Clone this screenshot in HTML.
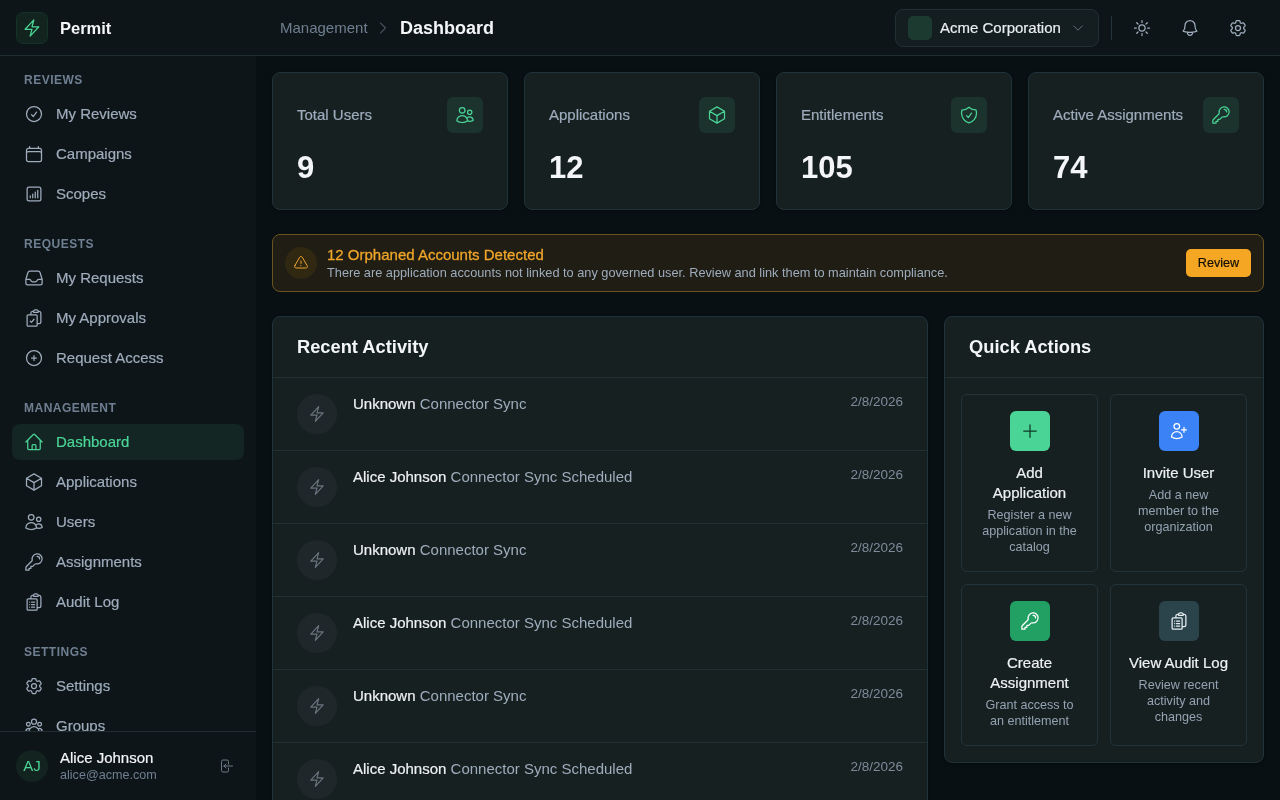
<!DOCTYPE html>
<html><head><meta charset="utf-8">
<style>
*{box-sizing:border-box;margin:0;padding:0}
html,body{-webkit-font-smoothing:antialiased;width:1280px;height:800px;overflow:hidden;background:#091013;font-family:"Liberation Sans",sans-serif;color:#e8edf0}
svg{display:block}
.ic{fill:none;stroke:currentColor;stroke-width:1.5;stroke-linecap:round;stroke-linejoin:round}
#hdr{position:absolute;left:0;top:0;width:1280px;height:56px;background:#0e1518;border-bottom:1px solid #1f2c31}
#logo{position:absolute;left:16px;top:12px;width:32px;height:32px;border-radius:7px;background:#13241f;border:1px solid #16302a;color:#4ad597}
#logo svg{position:absolute;left:5px;top:5px}
#brand{position:absolute;left:60px;top:19px;font-size:16.5px;font-weight:bold;color:#f3f5f7}
#bc1{position:absolute;left:280px;top:19px;font-size:15px;color:#6f7f92}
#bcchev{position:absolute;left:375px;top:20px;color:#6b7a88}
#bc2{position:absolute;left:400px;top:18px;font-size:18px;font-weight:bold;color:#f3f5f7}
#org{position:absolute;left:895px;top:9px;width:204px;height:38px;border-radius:8px;background:#141d20;border:1px solid #223036}
#orgsq{position:absolute;left:12px;top:6px;width:24px;height:24px;border-radius:5px;background:#1c3a30}
#orgname{position:absolute;left:44px;top:9px;font-size:15px;color:#e8edf0}
#orgchev{position:absolute;left:175px;top:11px;color:#6b7a88}
#vdiv{position:absolute;left:1111px;top:16px;width:1px;height:24px;background:#22353a}
.hi{position:absolute;top:18px;color:#9eacbc}
#side{position:absolute;left:0;top:56px;width:256px;height:744px;background:#0e1518}
.sec{position:absolute;margin-top:1px;left:24px;font-size:12px;font-weight:bold;letter-spacing:0.5px;color:#6f7f92}
.nav{position:absolute;left:12px;width:232px;height:36px;border-radius:8px;color:#9eacbc}
.nav svg{position:absolute;left:12px;top:8px}
.nav span{position:absolute;left:44px;top:9px;font-size:15px}
.nav.act{background:#142624;color:#4ad597}
#foot{position:absolute;left:0;top:731px;width:256px;height:69px;background:#0e1518;border-top:1px solid #1f2c31}
#av{position:absolute;left:16px;top:18px;width:32px;height:32px;border-radius:16px;background:#13231f;color:#4ad597;font-size:15px;text-align:center;line-height:32px}
#uname{position:absolute;left:60px;top:17px;font-size:15px;color:#f3f5f7}
#umail{position:absolute;left:60px;top:36px;font-size:12.6px;color:#6f7f92}
#logout{position:absolute;left:218px;top:26px;color:#6b7a88}

.card{position:absolute;background:#162021;border:1px solid #21333a;border-radius:8px;box-shadow:0 1px 3px rgba(0,0,0,0.35)}
.stat .lbl{position:absolute;left:24px;top:33px;font-size:15px;color:#9eacbc}
.stat .num{position:absolute;left:24px;top:77px;font-size:31px;font-weight:bold;color:#f3f5f7}
.stat .ib{position:absolute;right:24px;top:24px;width:36px;height:36px;border-radius:6px;background:#1b322d;color:#4ad597}
.stat .ib svg{position:absolute;left:8px;top:8px}
#alert{position:absolute;left:272px;top:234px;width:992px;height:58px;border-radius:8px;background:#1f1d14;border:1px solid #6b5320}
#alic{position:absolute;left:12px;top:12px;width:32px;height:32px;border-radius:16px;background:#312812;color:#f0a52a}
#alic svg{position:absolute;left:8px;top:8px}
#alt{position:absolute;left:54px;top:11px;font-size:15px;color:#f0a52a}
#als{position:absolute;left:54px;top:30px;font-size:12.75px;color:#9eacbc}
#albtn{position:absolute;left:913px;top:14px;width:65px;height:28px;border-radius:5px;background:#f5a623;color:#120e06;font-size:12.6px;text-align:center;line-height:28px}
.ch{position:absolute;left:0;top:0;right:0;height:61px;border-bottom:1px solid #223036}
.ch div{position:absolute;left:24px;top:19px;font-size:18.3px;font-weight:bold;color:#f3f5f7}
.row{position:absolute;left:0;right:0;height:73px;border-bottom:1px solid #223036}
.row .cir{position:absolute;left:24px;top:16px;width:40px;height:40px;border-radius:20px;background:#1f272b;color:#6b7680}
.row .cir svg{position:absolute;left:11px;top:11px}
.row .t{position:absolute;left:80px;top:17px;font-size:15px;color:#9eacbc;white-space:nowrap}
.row .t b{color:#eef1f3;font-weight:normal}
.row .d{position:absolute;right:24px;top:16px;font-size:13.5px;color:#7d8a9a}
.tile{position:absolute;border:1px solid #22343a;border-radius:6px;background:#162021;text-align:center}
.tile .box{position:absolute;left:48px;top:16px;width:40px;height:40px;border-radius:6px}
.tile .box svg{position:absolute;left:10px;top:10px}
.tile .tt{position:absolute;left:0;right:0;white-space:nowrap;top:68px;font-size:15px;line-height:20px;color:#eef1f3}
.tile .ds{position:absolute;left:0;right:0;white-space:nowrap;font-size:12.6px;line-height:16px;color:#94a2b2}

.med{-webkit-text-stroke:0.2px currentColor}
.nav span,#orgname,#uname,.row .t b,.tile .tt,#albtn,.stat .lbl{-webkit-text-stroke:0.2px currentColor}
#alt{-webkit-text-stroke:0.3px currentColor}
</style></head>
<body><div id="root" style="position:absolute;left:0;top:0;width:1280px;height:800px;will-change:transform">
<div id="hdr">
  <div id="logo"><svg width="20" height="20" viewBox="0 0 24 24" class="ic"><path d="m3.75 13.5 10.5-11.25L12 10.5h8.25L9.75 21.75 12 13.5H3.75Z"/></svg></div>
  <div id="brand">Permit</div>
  <div id="bc1">Management</div>
  <svg id="bcchev" width="16" height="16" viewBox="0 0 24 24" class="ic"><path d="m8.25 4.5 7.5 7.5-7.5 7.5"/></svg>
  <div id="bc2">Dashboard</div>
  <div id="org"><div id="orgsq"></div><div id="orgname">Acme Corporation</div>
    <svg id="orgchev" width="14" height="14" viewBox="0 0 24 24" class="ic"><path d="m19.5 8.25-7.5 7.5-7.5-7.5"/></svg></div>
  <div id="vdiv"></div>
  <svg class="hi ic" style="left:1132px" width="20" height="20" viewBox="0 0 24 24"><path d="M12 3v2.25m6.364.386-1.591 1.591M21 12h-2.25m-.386 6.364-1.591-1.591M12 18.75V21m-4.773-4.227-1.591 1.591M5.25 12H3m4.227-4.773L5.636 5.636M15.75 12a3.75 3.75 0 1 1-7.5 0 3.75 3.75 0 0 1 7.5 0Z"/></svg>
  <svg class="hi ic" style="left:1180px" width="20" height="20" viewBox="0 0 24 24"><path d="M14.857 17.082a23.848 23.848 0 0 0 5.454-1.31A8.967 8.967 0 0 1 18 9.750V9A6 6 0 0 0 6 9v.75a8.967 8.967 0 0 1-2.312 6.022c1.733.64 3.56 1.085 5.455 1.31m5.714 0a24.255 24.255 0 0 1-5.714 0m5.714 0a3 3 0 1 1-5.714 0"/></svg>
  <svg class="hi ic" style="left:1228px" width="20" height="20" viewBox="0 0 24 24"><path d="M9.594 3.94c.09-.542.56-.94 1.11-.94h2.593c.55 0 1.02.398 1.11.94l.213 1.281c.063.374.313.686.645.87.074.04.147.083.22.127.325.196.72.257 1.075.124l1.217-.456a1.125 1.125 0 0 1 1.37.49l1.296 2.247a1.125 1.125 0 0 1-.26 1.431l-1.003.827c-.293.241-.438.613-.43.992a7.723 7.723 0 0 1 0 .255c-.008.378.137.75.43.991l1.004.827c.424.35.534.955.26 1.430l-1.298 2.247a1.125 1.125 0 0 1-1.369.491l-1.217-.456c-.355-.133-.75-.072-1.076.124a6.470 6.470 0 0 1-.22.128c-.331.183-.581.495-.644.869l-.213 1.281c-.09.543-.56.94-1.11.94h-2.594c-.55 0-1.019-.398-1.11-.94l-.213-1.281c-.062-.374-.312-.686-.644-.87a6.520 6.520 0 0 1-.22-.127c-.325-.196-.72-.257-1.076-.124l-1.217.456a1.125 1.125 0 0 1-1.369-.49l-1.297-2.247a1.125 1.125 0 0 1 .26-1.431l1.004-.827c.292-.24.437-.613.43-.991a6.932 6.932 0 0 1 0-.255c.007-.38-.138-.751-.43-.992l-1.004-.827a1.125 1.125 0 0 1-.26-1.43l1.297-2.247a1.125 1.125 0 0 1 1.370-.491l1.216.456c.356.133.751.072 1.076-.124.072-.044.146-.086.22-.128.332-.183.582-.495.644-.869l.214-1.280Z"/><path d="M15 12a3 3 0 1 1-6 0 3 3 0 0 1 6 0Z"/></svg>
</div>

<div id="side">
<div class="sec" style="top:16px">REVIEWS</div>
<div class="nav" style="top:40px"><svg width="20" height="20" viewBox="0 0 24 24" class="ic"><path d="M9 12.75 11.25 15 15 9.75M21 12a9 9 0 1 1-18 0 9 9 0 0 1 18 0Z"/></svg><span>My Reviews</span></div>
<div class="nav" style="top:80px"><svg width="20" height="20" viewBox="0 0 24 24" class="ic"><path d="M6.75 3v2.25M17.25 3v2.25M3 18.75V7.5a2.25 2.25 0 0 1 2.25-2.25h13.5A2.25 2.25 0 0 1 21 7.5v11.25m-18 0A2.25 2.25 0 0 0 5.25 21h13.5A2.25 2.25 0 0 0 21 18.75m-18 0v-7.5A2.25 2.25 0 0 1 5.25 9h13.5A2.25 2.25 0 0 1 21 11.25v7.5"/></svg><span>Campaigns</span></div>
<div class="nav" style="top:120px"><svg width="20" height="20" viewBox="0 0 24 24" class="ic"><path d="M7.5 14.25v2.25m3-4.5v4.5m3-6.75v6.75m3-9v9M6 20.25h12A2.250 2.250 0 0 0 20.25 18V6A2.250 2.250 0 0 0 18 3.75H6A2.250 2.250 0 0 0 3.75 6v12A2.250 2.250 0 0 0 6 20.25Z"/></svg><span>Scopes</span></div>
<div class="sec" style="top:180px">REQUESTS</div>
<div class="nav" style="top:204px"><svg width="20" height="20" viewBox="0 0 24 24" class="ic"><path d="M2.25 13.5h3.86a2.25 2.25 0 0 1 2.012 1.244l.256.512a2.25 2.25 0 0 0 2.013 1.244h3.218a2.25 2.25 0 0 0 2.013-1.244l.256-.512a2.25 2.25 0 0 1 2.013-1.244h3.859m-19.5.338V18a2.25 2.25 0 0 0 2.25 2.25h15A2.25 2.25 0 0 0 21.75 18v-4.162c0-.224-.034-.447-.1-.661L19.24 5.338a2.25 2.25 0 0 0-2.15-1.588H6.911a2.25 2.25 0 0 0-2.15 1.588L2.35 13.177a2.25 2.25 0 0 0-.1.661Z"/></svg><span>My Requests</span></div>
<div class="nav" style="top:244px"><svg width="20" height="20" viewBox="0 0 24 24" class="ic"><path d="M11.35 3.836c-.065.21-.1.433-.1.664 0 .414.336.75.75.75h4.5a.75.75 0 0 0 .75-.75 2.25 2.25 0 0 0-.1-.664m-5.8 0A2.251 2.251 0 0 1 13.5 2.25H15c1.012 0 1.867.668 2.15 1.586m-5.8 0c-.376.023-.75.05-1.124.08C9.095 4.01 8.25 4.973 8.25 6.108V8.25m8.9-4.414c.376.023.75.05 1.124.08 1.131.094 1.976 1.057 1.976 2.192V16.5A2.25 2.25 0 0 1 18 18.75h-2.25m-7.5-10.5H4.875c-.621 0-1.125.504-1.125 1.125v11.25c0 .621.504 1.125 1.125 1.125h9.75c.621 0 1.125-.504 1.125-1.125V18.75m-7.5-10.5h6.375c.621 0 1.125.504 1.125 1.125v9.375m-8.25-3 1.5 1.5 3-3.75"/></svg><span>My Approvals</span></div>
<div class="nav" style="top:284px"><svg width="20" height="20" viewBox="0 0 24 24" class="ic"><path d="M12 9v6m3-3H9m12 0a9 9 0 1 1-18 0 9 9 0 0 1 18 0Z"/></svg><span>Request Access</span></div>
<div class="sec" style="top:344px">MANAGEMENT</div>
<div class="nav act" style="top:368px"><svg width="20" height="20" viewBox="0 0 24 24" class="ic"><path d="m2.25 12 8.954-8.955c.44-.439 1.152-.439 1.591 0L21.75 12M4.5 9.75v10.125c0 .621.504 1.125 1.125 1.125H9.75v-4.875c0-.621.504-1.125 1.125-1.125h2.25c.621 0 1.125.504 1.125 1.125V21h4.125c.621 0 1.125-.504 1.125-1.125V9.75M8.25 21h8.25"/></svg><span>Dashboard</span></div>
<div class="nav" style="top:408px"><svg width="20" height="20" viewBox="0 0 24 24" class="ic"><path d="m21 7.5-9-5.25L3 7.5m18 0-9 5.25m9-5.25v9l-9 5.25M3 7.5l9 5.25M3 7.5v9l9 5.25m0-9v9"/></svg><span>Applications</span></div>
<div class="nav" style="top:448px"><svg width="20" height="20" viewBox="0 0 24 24" class="ic"><path d="M15 19.128a9.38 9.38 0 0 0 2.625.372 9.337 9.337 0 0 0 4.121-.952 4.125 4.125 0 0 0-7.533-2.493M15 19.128v-.003c0-1.113-.285-2.16-.786-3.07M15 19.128v.106A12.318 12.318 0 0 1 8.624 21c-2.331 0-4.512-.645-6.374-1.766l-.001-.109a6.375 6.375 0 0 1 11.964-3.07M12 6.375a3.375 3.375 0 1 1-6.75 0 3.375 3.375 0 0 1 6.75 0Zm8.25 2.25a2.625 2.625 0 1 1-5.25 0 2.625 2.625 0 0 1 5.25 0Z"/></svg><span>Users</span></div>
<div class="nav" style="top:488px"><svg width="20" height="20" viewBox="0 0 24 24" class="ic"><path d="M15.75 5.25a3 3 0 0 1 3 3m3 0a6 6 0 0 1-7.029 5.912c-.563-.097-1.159.026-1.563.43L10.5 17.25H8.25v2.25H6v2.25H2.25v-2.818c0-.597.237-1.17.659-1.591l6.499-6.499c.404-.404.527-1 .43-1.563A6 6 0 1 1 21.75 8.25Z"/></svg><span>Assignments</span></div>
<div class="nav" style="top:528px"><svg width="20" height="20" viewBox="0 0 24 24" class="ic"><path d="M9 12h3.75M9 15h3.75M9 18h3.75m3 .75H18a2.25 2.25 0 0 0 2.25-2.25V6.108c0-1.135-.845-2.098-1.976-2.192a48.424 48.424 0 0 0-1.123-.08m-5.801 0c-.065.21-.1.433-.1.664 0 .414.336.75.75.75h4.5a.75.75 0 0 0 .75-.75 2.25 2.25 0 0 0-.1-.664m-5.8 0A2.251 2.251 0 0 1 13.5 2.25H15c1.012 0 1.867.668 2.15 1.586m-5.8 0c-.376.023-.75.05-1.124.08C9.095 4.01 8.25 4.973 8.25 6.108V8.25m0 0H4.875c-.621 0-1.125.504-1.125 1.125v11.25c0 .621.504 1.125 1.125 1.125h9.75c.621 0 1.125-.504 1.125-1.125V9.375c0-.621-.504-1.125-1.125-1.125H8.25ZM6.75 12h.008v.008H6.75V12Zm0 3h.008v.008H6.75V15Zm0 3h.008v.008H6.75V18Z"/></svg><span>Audit Log</span></div>
<div class="sec" style="top:588px">SETTINGS</div>
<div class="nav" style="top:612px"><svg width="20" height="20" viewBox="0 0 24 24" class="ic"><path d="M9.594 3.94c.09-.542.56-.94 1.11-.94h2.593c.55 0 1.02.398 1.11.94l.213 1.281c.063.374.313.686.645.87.074.04.147.083.22.127.325.196.72.257 1.075.124l1.217-.456a1.125 1.125 0 0 1 1.37.49l1.296 2.247a1.125 1.125 0 0 1-.26 1.431l-1.003.827c-.293.241-.438.613-.43.992a7.723 7.723 0 0 1 0 .255c-.008.378.137.75.43.991l1.004.827c.424.35.534.955.26 1.430l-1.298 2.247a1.125 1.125 0 0 1-1.369.491l-1.217-.456c-.355-.133-.75-.072-1.076.124a6.470 6.470 0 0 1-.22.128c-.331.183-.581.495-.644.869l-.213 1.281c-.09.543-.56.94-1.11.94h-2.594c-.55 0-1.019-.398-1.11-.94l-.213-1.281c-.062-.374-.312-.686-.644-.87a6.520 6.520 0 0 1-.22-.127c-.325-.196-.72-.257-1.076-.124l-1.217.456a1.125 1.125 0 0 1-1.369-.49l-1.297-2.247a1.125 1.125 0 0 1 .26-1.431l1.004-.827c.292-.24.437-.613.43-.991a6.932 6.932 0 0 1 0-.255c.007-.38-.138-.751-.43-.992l-1.004-.827a1.125 1.125 0 0 1-.26-1.43l1.297-2.247a1.125 1.125 0 0 1 1.370-.491l1.216.456c.356.133.751.072 1.076-.124.072-.044.146-.086.22-.128.332-.183.582-.495.644-.869l.214-1.280Z"/><path d="M15 12a3 3 0 1 1-6 0 3 3 0 0 1 6 0Z"/></svg><span>Settings</span></div>
<div class="nav" style="top:652px"><svg width="20" height="20" viewBox="0 0 24 24" class="ic"><path d="M18 18.72a9.094 9.094 0 0 0 3.741-.479 3 3 0 0 0-4.682-2.72m.94 3.198.001.031c0 .225-.012.447-.037.666A11.944 11.944 0 0 1 12 21c-2.17 0-4.207-.576-5.963-1.584A6.062 6.062 0 0 1 6 18.719m12 0a5.971 5.971 0 0 0-.941-3.197m0 0A5.995 5.995 0 0 0 12 12.75a5.995 5.995 0 0 0-5.058 2.772m0 0a3 3 0 0 0-4.681 2.72 8.986 8.986 0 0 0 3.74.477m.94-3.197a5.971 5.971 0 0 0-.94 3.197M15 6.75a3 3 0 1 1-6 0 3 3 0 0 1 6 0Zm6 3a2.25 2.25 0 1 1-4.5 0 2.25 2.25 0 0 1 4.5 0Zm-13.5 0a2.25 2.25 0 1 1-4.5 0 2.25 2.25 0 0 1 4.5 0Z"/></svg><span>Groups</span></div>
</div>

<div id="foot"><div id="av">AJ</div><div id="uname">Alice Johnson</div><div id="umail">alice@acme.com</div>
<svg id="logout" width="16" height="16" viewBox="0 0 24 24" class="ic"><path d="M15.75 9V5.25A2.25 2.25 0 0 0 13.5 3h-6a2.25 2.25 0 0 0-2.25 2.25v13.5A2.25 2.25 0 0 0 7.5 21h6a2.25 2.25 0 0 0 2.25-2.25V15M12 9l-3 3m0 0 3 3m-3-3h12.75"/></svg></div>
<div class="card stat" style="left:272px;top:72px;width:236px;height:138px"><div class="lbl">Total Users</div><div class="num">9</div><div class="ib"><svg width="20" height="20" viewBox="0 0 24 24" class="ic"><path d="M15 19.128a9.38 9.38 0 0 0 2.625.372 9.337 9.337 0 0 0 4.121-.952 4.125 4.125 0 0 0-7.533-2.493M15 19.128v-.003c0-1.113-.285-2.16-.786-3.07M15 19.128v.106A12.318 12.318 0 0 1 8.624 21c-2.331 0-4.512-.645-6.374-1.766l-.001-.109a6.375 6.375 0 0 1 11.964-3.07M12 6.375a3.375 3.375 0 1 1-6.75 0 3.375 3.375 0 0 1 6.75 0Zm8.25 2.25a2.625 2.625 0 1 1-5.25 0 2.625 2.625 0 0 1 5.25 0Z"/></svg></div></div>
<div class="card stat" style="left:524px;top:72px;width:236px;height:138px"><div class="lbl">Applications</div><div class="num">12</div><div class="ib"><svg width="20" height="20" viewBox="0 0 24 24" class="ic"><path d="m21 7.5-9-5.25L3 7.5m18 0-9 5.25m9-5.25v9l-9 5.25M3 7.5l9 5.25M3 7.5v9l9 5.25m0-9v9"/></svg></div></div>
<div class="card stat" style="left:776px;top:72px;width:236px;height:138px"><div class="lbl">Entitlements</div><div class="num">105</div><div class="ib"><svg width="20" height="20" viewBox="0 0 24 24" class="ic"><path d="M9 12.75 11.25 15 15 9.75m-3-7.036A11.959 11.959 0 0 1 3.598 6 11.99 11.99 0 0 0 3 9.749c0 5.592 3.824 10.29 9 11.623 5.176-1.332 9-6.03 9-11.622 0-1.31-.21-2.571-.598-3.751h-.152c-3.196 0-6.1-1.248-8.25-3.285Z"/></svg></div></div>
<div class="card stat" style="left:1028px;top:72px;width:236px;height:138px"><div class="lbl">Active Assignments</div><div class="num">74</div><div class="ib"><svg width="20" height="20" viewBox="0 0 24 24" class="ic"><path d="M15.75 5.25a3 3 0 0 1 3 3m3 0a6 6 0 0 1-7.029 5.912c-.563-.097-1.159.026-1.563.43L10.5 17.25H8.25v2.25H6v2.25H2.25v-2.818c0-.597.237-1.17.659-1.591l6.499-6.499c.404-.404.527-1 .43-1.563A6 6 0 1 1 21.75 8.25Z"/></svg></div></div>
<div id="alert"><div id="alic"><svg width="16" height="16" viewBox="0 0 24 24" class="ic"><path d="M12 9v3.75m-9.303 3.376c-.866 1.5.217 3.374 1.948 3.374h14.71c1.73 0 2.813-1.874 1.948-3.374L13.949 3.378c-.866-1.5-3.032-1.5-3.898 0L2.697 16.126ZM12 15.75h.007v.008H12v-.008Z"/></svg></div><div id="alt">12 Orphaned Accounts Detected</div><div id="als">There are application accounts not linked to any governed user. Review and link them to maintain compliance.</div><div id="albtn">Review</div></div>
<div class="card" style="left:272px;top:316px;width:656px;height:520px;overflow:hidden"><div class="ch"><div>Recent Activity</div></div><div class="row" style="top:61px"><div class="cir"><svg width="18" height="18" viewBox="0 0 24 24" class="ic"><path d="m3.75 13.5 10.5-11.25L12 10.5h8.25L9.75 21.75 12 13.5H3.75Z"/></svg></div><div class="t"><b>Unknown</b> Connector Sync</div><div class="d">2/8/2026</div></div><div class="row" style="top:134px"><div class="cir"><svg width="18" height="18" viewBox="0 0 24 24" class="ic"><path d="m3.75 13.5 10.5-11.25L12 10.5h8.25L9.75 21.75 12 13.5H3.75Z"/></svg></div><div class="t"><b>Alice Johnson</b> Connector Sync Scheduled</div><div class="d">2/8/2026</div></div><div class="row" style="top:207px"><div class="cir"><svg width="18" height="18" viewBox="0 0 24 24" class="ic"><path d="m3.75 13.5 10.5-11.25L12 10.5h8.25L9.75 21.75 12 13.5H3.75Z"/></svg></div><div class="t"><b>Unknown</b> Connector Sync</div><div class="d">2/8/2026</div></div><div class="row" style="top:280px"><div class="cir"><svg width="18" height="18" viewBox="0 0 24 24" class="ic"><path d="m3.75 13.5 10.5-11.25L12 10.5h8.25L9.75 21.75 12 13.5H3.75Z"/></svg></div><div class="t"><b>Alice Johnson</b> Connector Sync Scheduled</div><div class="d">2/8/2026</div></div><div class="row" style="top:353px"><div class="cir"><svg width="18" height="18" viewBox="0 0 24 24" class="ic"><path d="m3.75 13.5 10.5-11.25L12 10.5h8.25L9.75 21.75 12 13.5H3.75Z"/></svg></div><div class="t"><b>Unknown</b> Connector Sync</div><div class="d">2/8/2026</div></div><div class="row" style="top:426px"><div class="cir"><svg width="18" height="18" viewBox="0 0 24 24" class="ic"><path d="m3.75 13.5 10.5-11.25L12 10.5h8.25L9.75 21.75 12 13.5H3.75Z"/></svg></div><div class="t"><b>Alice Johnson</b> Connector Sync Scheduled</div><div class="d">2/8/2026</div></div></div>
<div class="card" style="left:944px;top:316px;width:320px;height:447px"><div class="ch"><div>Quick Actions</div></div><div class="tile" style="left:16px;top:77px;width:137px;height:178px"><div class="box" style="background:#4ad597;color:#0f3a26"><svg width="20" height="20" viewBox="0 0 24 24" class="ic"><path d="M12 4.5v15m7.5-7.5h-15"/></svg></div><div class="tt">Add<br>Application</div><div class="ds" style="top:112px">Register a new<br>application in the<br>catalog</div></div><div class="tile" style="left:165px;top:77px;width:137px;height:178px"><div class="box" style="background:#3b82f6;color:#ffffff"><svg width="20" height="20" viewBox="0 0 24 24" class="ic"><path d="M18 7.5v3m0 0v3m0-3h3m-3 0h-3m-2.25-4.125a3.375 3.375 0 1 1-6.75 0 3.375 3.375 0 0 1 6.75 0ZM3 19.235v-.11a6.375 6.375 0 0 1 12.75 0v.109A12.318 12.318 0 0 1 9.374 21c-2.331 0-4.512-.645-6.374-1.766Z"/></svg></div><div class="tt">Invite User</div><div class="ds" style="top:92px">Add a new<br>member to the<br>organization</div></div><div class="tile" style="left:16px;top:267px;width:137px;height:162px"><div class="box" style="background:#22a063;color:#ffffff"><svg width="20" height="20" viewBox="0 0 24 24" class="ic"><path d="M15.75 5.25a3 3 0 0 1 3 3m3 0a6 6 0 0 1-7.029 5.912c-.563-.097-1.159.026-1.563.43L10.5 17.25H8.25v2.25H6v2.25H2.25v-2.818c0-.597.237-1.17.659-1.591l6.499-6.499c.404-.404.527-1 .43-1.563A6 6 0 1 1 21.75 8.25Z"/></svg></div><div class="tt">Create<br>Assignment</div><div class="ds" style="top:112px">Grant access to<br>an entitlement</div></div><div class="tile" style="left:165px;top:267px;width:137px;height:162px"><div class="box" style="background:#2b444c;color:#e8edf0"><svg width="20" height="20" viewBox="0 0 24 24" class="ic"><path d="M9 12h3.75M9 15h3.75M9 18h3.75m3 .75H18a2.25 2.25 0 0 0 2.25-2.25V6.108c0-1.135-.845-2.098-1.976-2.192a48.424 48.424 0 0 0-1.123-.08m-5.801 0c-.065.21-.1.433-.1.664 0 .414.336.75.75.75h4.5a.75.75 0 0 0 .75-.75 2.25 2.25 0 0 0-.1-.664m-5.8 0A2.251 2.251 0 0 1 13.5 2.25H15c1.012 0 1.867.668 2.15 1.586m-5.8 0c-.376.023-.75.05-1.124.08C9.095 4.01 8.25 4.973 8.25 6.108V8.25m0 0H4.875c-.621 0-1.125.504-1.125 1.125v11.25c0 .621.504 1.125 1.125 1.125h9.75c.621 0 1.125-.504 1.125-1.125V9.375c0-.621-.504-1.125-1.125-1.125H8.25ZM6.75 12h.008v.008H6.75V12Zm0 3h.008v.008H6.75V15Zm0 3h.008v.008H6.75V18Z"/></svg></div><div class="tt">View Audit Log</div><div class="ds" style="top:92px">Review recent<br>activity and<br>changes</div></div></div>

</div></body></html>
